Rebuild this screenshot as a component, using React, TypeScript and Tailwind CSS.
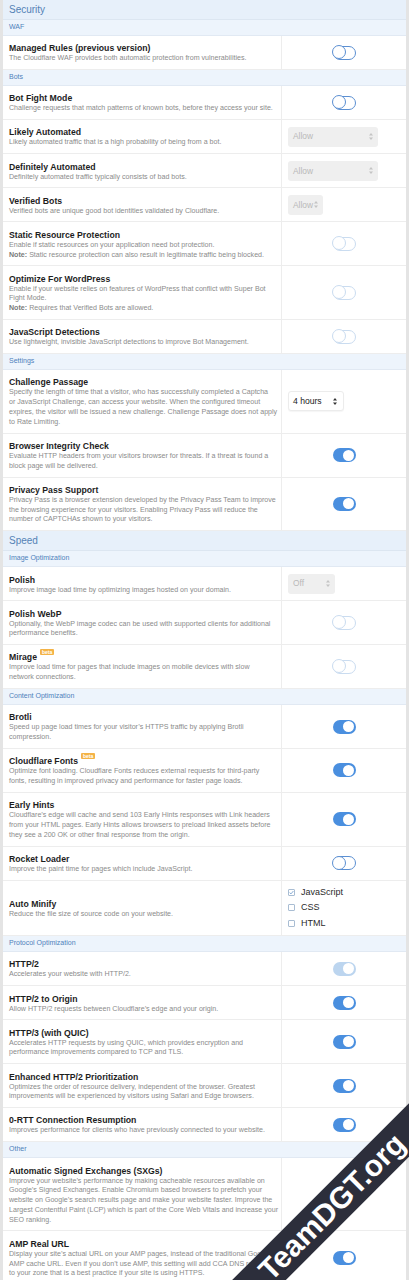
import React from "react";

type ToggleState = "off" | "offDis" | "on" | "onDis";

type Control =
  | { kind: "toggle"; state: ToggleState }
  | { kind: "select"; value: string; width: string; disabled?: boolean }
  | { kind: "checks" }
  | { kind: "none" };

type Line = React.ReactNode;

type RowDef = {
  title: string;
  beta?: boolean;
  lines: Line[];
  control: Control;
};

type Group = { label: string; rows: RowDef[] };
type SectionDef = { title: string; groups: Group[] };

const Note = ({ children }: { children: React.ReactNode }) => (
  <>
    <span className="font-bold text-[#7a7a7a]">Note:</span> {children}
  </>
);

function Toggle({ state }: { state: ToggleState }) {
  if (state === "on" || state === "onDis") {
    const track = state === "on" ? "bg-[#4a8fdf]" : "bg-[#bcd5ef]";
    return (
      <span className={`relative inline-block w-[23px] h-[14px] rounded-full ${track}`}>
        <span className="absolute right-[1.5px] top-[1.5px] w-[11px] h-[11px] rounded-full bg-white" />
      </span>
    );
  }
  const line = state === "off" ? "border-[#5b8fd2]" : "border-[#cadcf0]";
  return (
    <span className={`relative inline-block w-[23px] h-[14px] rounded-full border-[1.5px] bg-white ${line}`}>
      <span className={`absolute left-[-1.5px] top-[-1.5px] w-[14px] h-[14px] rounded-full border-[1.5px] bg-white ${line}`} />
    </span>
  );
}

function SelectArrows({ color }: { color: string }) {
  return (
    <svg width="4" height="7" viewBox="0 0 4 7">
      <path d="M2 0L4 2.6H0z M2 7L0 4.4H4z" fill={color} />
    </svg>
  );
}

function Select({ value, width, disabled }: { value: string; width: string; disabled?: boolean }) {
  if (disabled) {
    return (
      <div
        className={`h-[20px] ${width} rounded-[3px] bg-[#efefef] flex items-center justify-between pl-[5px] pr-[5px] text-[8.4px] text-[#b9b9b9]`}
      >
        <span>{value}</span>
        <SelectArrows color="#c4c4c4" />
      </div>
    );
  }
  return (
    <div
      className={`h-[20px] ${width} rounded-[3px] bg-white border border-[#ececec] shadow-[0_1px_1px_rgba(0,0,0,0.04)] flex items-center justify-between pl-[4px] pr-[6px] text-[8.6px] text-[#222]`}
    >
      <span>{value}</span>
      <SelectArrows color="#333" />
    </div>
  );
}

function Check({ checked, label }: { checked?: boolean; label: string }) {
  return (
    <div className="h-[15.5px] flex items-center gap-[6px]">
      <span className="w-[7px] h-[7px] border border-[#a9bdd3] rounded-[1px] flex items-center justify-center bg-white">
        {checked && (
          <svg width="5" height="5" viewBox="0 0 5 5">
            <path d="M0.6 2.6L2 3.9L4.4 1" stroke="#7ea6d2" strokeWidth="0.9" fill="none" />
          </svg>
        )}
      </span>
      <span className="text-[9px] text-[#2a2a2a]">{label}</span>
    </div>
  );
}

function Row({ row }: { row: RowDef }) {
  const c = row.control;
  const rightAlign = c.kind === "toggle" ? "justify-center" : "justify-start";
  return (
    <div className="flex border-b border-[#ededed] bg-white">
      <div className="w-[278px] shrink-0 px-[6px] pt-[7.3px] pb-[5px] flex flex-col justify-center">
        <div className="text-[8.7px] leading-[11px] font-bold text-[#1d1d1d] whitespace-nowrap">
          {row.title}
          {row.beta && (
            <span className="relative top-[-3px] ml-[3px] inline-block rounded-[1px] bg-[#f4b346] px-[2px] text-[5px] leading-[6px] font-bold text-white align-top">
              beta
            </span>
          )}
        </div>
        {row.lines.map((l, i) => (
          <div key={i} className="text-[7.1px] leading-[9.8px] text-[#8b8b8b] whitespace-nowrap">
            {l}
          </div>
        ))}
      </div>
      <div className={`flex-1 border-l border-[#ededed] flex items-center px-[6px] ${rightAlign}`}>
        {c.kind === "toggle" && <Toggle state={c.state} />}
        {c.kind === "select" && <Select value={c.value} width={c.width} disabled={c.disabled} />}
        {c.kind === "checks" && (
          <div className="py-[4px] flex flex-col">
            <Check checked label="JavaScript" />
            <Check label="CSS" />
            <Check label="HTML" />
          </div>
        )}
      </div>
    </div>
  );
}

const t = (state: ToggleState): Control => ({ kind: "toggle", state });

const sections: SectionDef[] = [
  {
    title: "Security",
    groups: [
      {
        label: "WAF",
        rows: [
          {
            title: "Managed Rules (previous version)",
            lines: ["The Cloudflare WAF provides both automatic protection from vulnerabilities."],
            control: t("off"),
          },
        ],
      },
      {
        label: "Bots",
        rows: [
          {
            title: "Bot Fight Mode",
            lines: ["Challenge requests that match patterns of known bots, before they access your site."],
            control: t("off"),
          },
          {
            title: "Likely Automated",
            lines: ["Likely automated traffic that is a high probability of being from a bot."],
            control: { kind: "select", value: "Allow", width: "w-[90px]", disabled: true },
          },
          {
            title: "Definitely Automated",
            lines: ["Definitely automated traffic typically consists of bad bots."],
            control: { kind: "select", value: "Allow", width: "w-[90px]", disabled: true },
          },
          {
            title: "Verified Bots",
            lines: ["Verified bots are unique good bot identities validated by Cloudflare."],
            control: { kind: "select", value: "Allow", width: "w-[35px]", disabled: true },
          },
          {
            title: "Static Resource Protection",
            lines: [
              "Enable if static resources on your application need bot protection.",
              <Note>Static resource protection can also result in legitimate traffic being blocked.</Note>,
            ],
            control: t("offDis"),
          },
          {
            title: "Optimize For WordPress",
            lines: [
              "Enable if your website relies on features of WordPress that conflict with Super Bot",
              "Fight Mode.",
              <Note>Requires that Verified Bots are allowed.</Note>,
            ],
            control: t("offDis"),
          },
          {
            title: "JavaScript Detections",
            lines: ["Use lightweight, invisible JavaScript detections to improve Bot Management."],
            control: t("offDis"),
          },
        ],
      },
      {
        label: "Settings",
        rows: [
          {
            title: "Challenge Passage",
            lines: [
              "Specify the length of time that a visitor, who has successfully completed a Captcha",
              "or JavaScript Challenge, can access your website. When the configured timeout",
              "expires, the visitor will be issued a new challenge. Challenge Passage does not apply",
              "to Rate Limiting.",
            ],
            control: { kind: "select", value: "4 hours", width: "w-[56px]" },
          },
          {
            title: "Browser Integrity Check",
            lines: [
              "Evaluate HTTP headers from your visitors browser for threats. If a threat is found a",
              "block page will be delivered.",
            ],
            control: t("on"),
          },
          {
            title: "Privacy Pass Support",
            lines: [
              "Privacy Pass is a browser extension developed by the Privacy Pass Team to improve",
              "the browsing experience for your visitors. Enabling Privacy Pass will reduce the",
              "number of CAPTCHAs shown to your visitors.",
            ],
            control: t("on"),
          },
        ],
      },
    ],
  },
  {
    title: "Speed",
    groups: [
      {
        label: "Image Optimization",
        rows: [
          {
            title: "Polish",
            lines: ["Improve image load time by optimizing images hosted on your domain."],
            control: { kind: "select", value: "Off", width: "w-[47px]", disabled: true },
          },
          {
            title: "Polish WebP",
            lines: [
              "Optionally, the WebP image codec can be used with supported clients for additional",
              "performance benefits.",
            ],
            control: t("offDis"),
          },
          {
            title: "Mirage",
            beta: true,
            lines: [
              "Improve load time for pages that include images on mobile devices with slow",
              "network connections.",
            ],
            control: t("offDis"),
          },
        ],
      },
      {
        label: "Content Optimization",
        rows: [
          {
            title: "Brotli",
            lines: [
              "Speed up page load times for your visitor\u2019s HTTPS traffic by applying Brotli",
              "compression.",
            ],
            control: t("on"),
          },
          {
            title: "Cloudflare Fonts",
            beta: true,
            lines: [
              "Optimize font loading. Cloudflare Fonts reduces external requests for third-party",
              "fonts, resulting in improved privacy and performance for faster page loads.",
            ],
            control: t("on"),
          },
          {
            title: "Early Hints",
            lines: [
              "Cloudflare\u2019s edge will cache and send 103 Early Hints responses with Link headers",
              "from your HTML pages. Early Hints allows browsers to preload linked assets before",
              "they see a 200 OK or other final response from the origin.",
            ],
            control: t("on"),
          },
          {
            title: "Rocket Loader",
            lines: ["Improve the paint time for pages which include JavaScript."],
            control: t("off"),
          },
          {
            title: "Auto Minify",
            lines: ["Reduce the file size of source code on your website."],
            control: { kind: "checks" },
          },
        ],
      },
      {
        label: "Protocol Optimization",
        rows: [
          {
            title: "HTTP/2",
            lines: ["Accelerates your website with HTTP/2."],
            control: t("onDis"),
          },
          {
            title: "HTTP/2 to Origin",
            lines: ["Allow HTTP/2 requests between Cloudflare\u2019s edge and your origin."],
            control: t("on"),
          },
          {
            title: "HTTP/3 (with QUIC)",
            lines: [
              "Accelerates HTTP requests by using QUIC, which provides encryption and",
              "performance improvements compared to TCP and TLS.",
            ],
            control: t("on"),
          },
          {
            title: "Enhanced HTTP/2 Prioritization",
            lines: [
              "Optimizes the order of resource delivery, independent of the browser. Greatest",
              "improvements will be experienced by visitors using Safari and Edge browsers.",
            ],
            control: t("on"),
          },
          {
            title: "0-RTT Connection Resumption",
            lines: ["Improves performance for clients who have previously connected to your website."],
            control: t("on"),
          },
        ],
      },
      {
        label: "Other",
        rows: [
          {
            title: "Automatic Signed Exchanges (SXGs)",
            lines: [
              "Improve your website\u2019s performance by making cacheable resources available on",
              "Google\u2019s Signed Exchanges. Enable Chromium based browsers to prefetch your",
              "website on Google\u2019s search results page and make your website faster. Improve the",
              "Largest Contentful Paint (LCP) which is part of the Core Web Vitals and increase your",
              "SEO ranking.",
            ],
            control: { kind: "none" },
          },
          {
            title: "AMP Real URL",
            lines: [
              "Display your site\u2019s actual URL on your AMP pages, instead of the traditional Google",
              "AMP cache URL. Even if you don\u2019t use AMP, this setting will add CCA DNS records",
              "to your zone that is a best practice if your site is using HTTPS.",
            ],
            control: t("on"),
          },
        ],
      },
    ],
  },
];

function Section({ s }: { s: SectionDef }) {
  return (
    <div>
      <div className="h-[20px] flex items-center px-[6px] bg-[#e7f0fa] border-b border-[#dce6f1] text-[10px] text-[#5482b6]">
        {s.title}
      </div>
      {s.groups.map((g) => (
        <div key={g.label}>
          <div className="h-[16px] flex items-center px-[6px] bg-[#edf4fc] border-b border-[#e1e9f3] text-[7px] text-[#4e81bb]">
            {g.label}
          </div>
          {g.rows.map((r) => (
            <Row key={r.title} row={r} />
          ))}
        </div>
      ))}
    </div>
  );
}

export default function App() {
  return (
    <div className="relative h-[1280px] w-[409px] overflow-hidden bg-[#e4e4e4] px-[3px] font-['Liberation_Sans',Arial,sans-serif]">
      <div className="bg-white">
        {sections.map((s) => (
          <Section key={s.title} s={s} />
        ))}
      </div>

      {/* corner ribbon */}
      <div className="absolute left-[132px] top-[1188px] w-[400px] h-[38px] rotate-[-45deg] bg-[#2c2e3b] flex items-center justify-center">
        <span className="text-[30px] font-bold leading-none text-white">TeamDGT.org</span>
      </div>
    </div>
  );
}
